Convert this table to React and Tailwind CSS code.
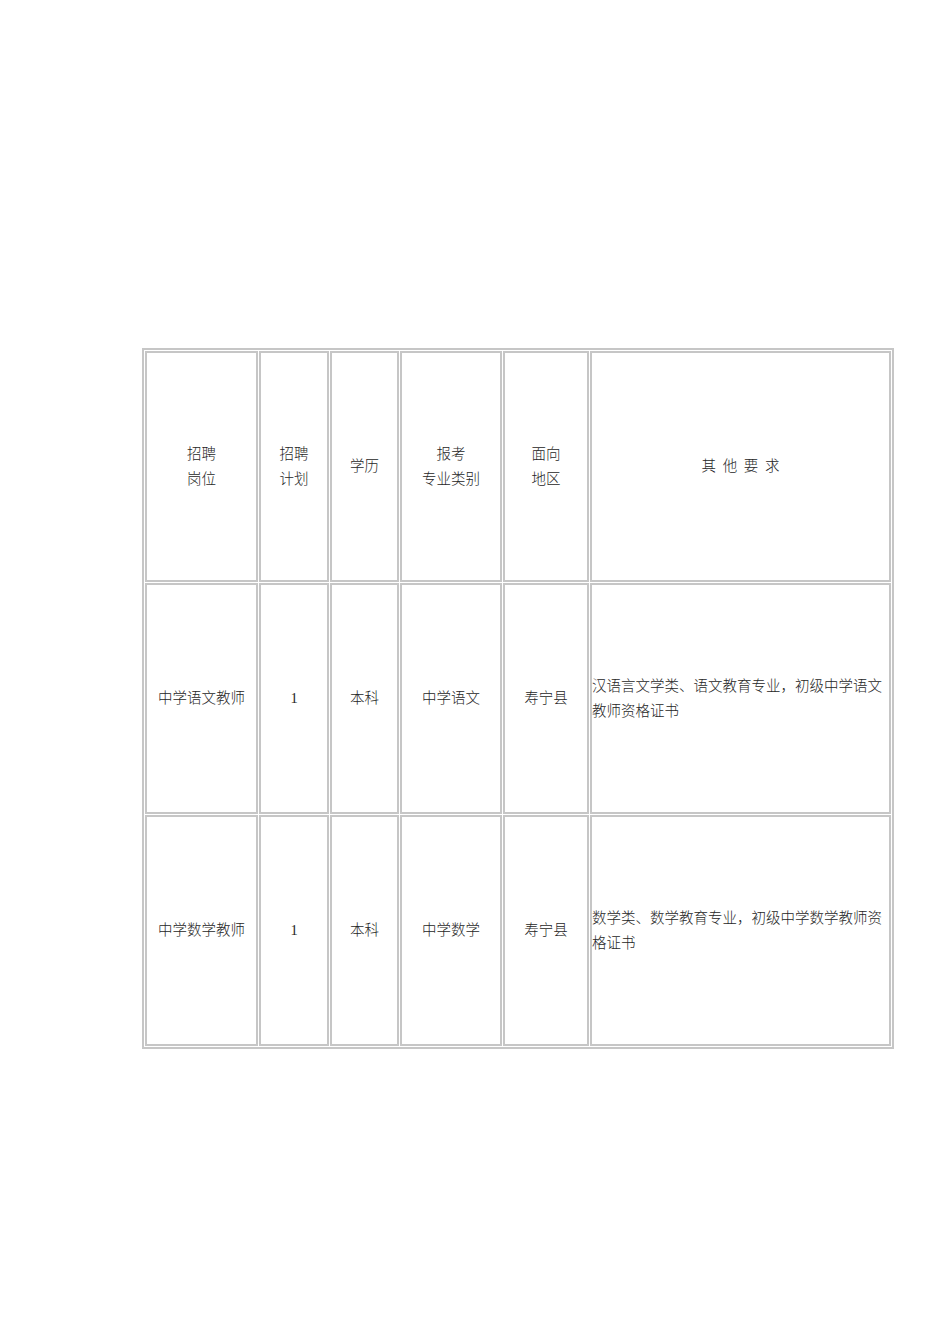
import React from "react";

const rows = [
  {
    post: "中学语文教师",
    plan: "1",
    edu: "本科",
    major: "中学语文",
    area: "寿宁县",
    other: "汉语言文学类、语文教育专业，初级中学语文教师资格证书",
  },
  {
    post: "中学数学教师",
    plan: "1",
    edu: "本科",
    major: "中学数学",
    area: "寿宁县",
    other: "数学类、数学教育专业，初级中学数学教师资格证书",
  },
];

const Cell = ({ children, left }) => (
  <div
    className={
      "border-2 border-[#c6c6c6] flex items-center " +
      (left ? "justify-start text-left" : "justify-center text-center")
    }
  >
    <div className="w-full">{children}</div>
  </div>
);

export default function App() {
  return (
    <div
      className="min-h-[1344px] bg-white pt-[348px] pl-[142px] text-[#262626] text-[14.5px] leading-[25px] font-light"
      style={{ fontFamily: '"Liberation Serif", "Noto Sans CJK SC", serif' }}
    >
      <div className="w-[752px] border-2 border-[#c6c6c6] p-px">
        <div className="grid grid-cols-[113px_70px_69px_102px_86px_301px] auto-rows-[231px] gap-px">
          <Cell>
            招聘
            <br />
            岗位
          </Cell>
          <Cell>
            招聘
            <br />
            计划
          </Cell>
          <Cell>学历</Cell>
          <Cell>
            报考
            <br />
            专业类别
          </Cell>
          <Cell>
            面向
            <br />
            地区
          </Cell>
          <Cell>
            <span className="[word-spacing:3px]">其 他 要 求</span>
          </Cell>

          {rows.map((r) => (
            <React.Fragment key={r.post}>
              <Cell>{r.post}</Cell>
              <Cell>{r.plan}</Cell>
              <Cell>{r.edu}</Cell>
              <Cell>{r.major}</Cell>
              <Cell>{r.area}</Cell>
              <Cell left>{r.other}</Cell>
            </React.Fragment>
          ))}
        </div>
      </div>
    </div>
  );
}
